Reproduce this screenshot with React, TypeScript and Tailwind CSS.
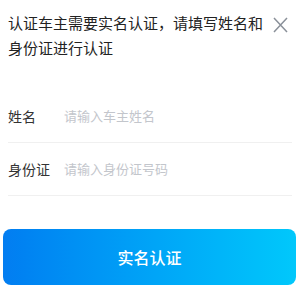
import React from "react";

const FONT = "font-['Noto_Sans_CJK_SC','Noto_Sans',sans-serif]";

function Field({ label, placeholder }: { label: string; placeholder: string }) {
  return (
    <div className="flex h-[53px] items-center border-b border-[#f0f0f0]">
      <span className="w-[56px] shrink-0 text-[14px] text-[#333]">{label}</span>
      <input
        className="min-w-0 flex-1 bg-transparent text-[13px] text-[#333] outline-none placeholder:text-[#c3c6cc]"
        placeholder={placeholder}
      />
    </div>
  );
}

export default function App() {
  return (
    <div className={`h-[300px] w-[300px] bg-white ${FONT}`}>
      {/* Header */}
      <div className="flex items-start justify-between pl-2 pr-2 pt-[10px]">
        <p className="w-[262px] text-[15px] leading-[25px] text-[#222]">
          认证车主需要实名认证，请填写姓名和身份证进行认证
        </p>
        <button className="mt-[7px] mr-[4px] text-[#8a9099]">
          <svg width="15" height="16" viewBox="0 0 15 16" fill="none" stroke="currentColor" strokeWidth="1.5">
            <path d="M1 1L14 15M14 1L1 15" />
          </svg>
        </button>
      </div>

      {/* Form */}
      <div className="mx-2 mt-[30px]">
        <Field label="姓名" placeholder="请输入车主姓名" />
        <Field label="身份证" placeholder="请输入身份证号码" />
      </div>

      {/* Submit */}
      <div className="px-[3px] pt-[33px]">
        <button className="flex h-[56px] w-[293px] items-center justify-center rounded-[8px] bg-gradient-to-r from-[#037df1] to-[#02c8fb] text-[16px] font-medium text-white">
          实名认证
        </button>
      </div>
    </div>
  );
}
